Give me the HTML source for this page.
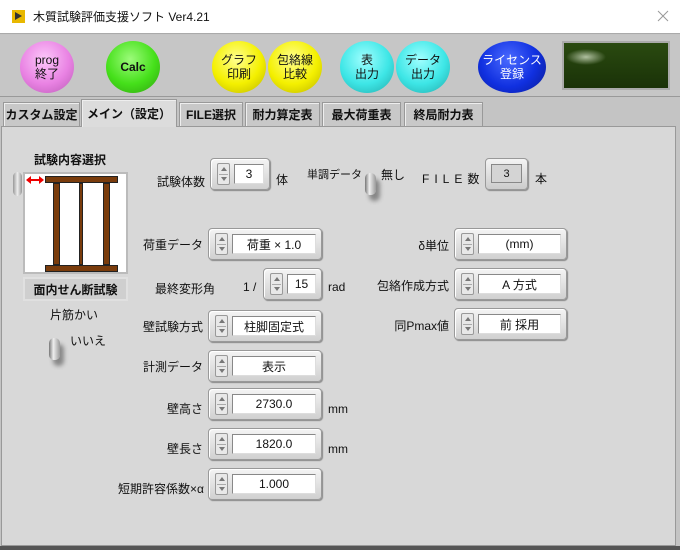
<!DOCTYPE html>
<html><head><meta charset="utf-8"><style>
*{box-sizing:border-box;margin:0;padding:0}
body{width:680px;height:550px;overflow:hidden;background:#c4c4c4;font-family:"Liberation Sans","Noto Sans CJK JP",sans-serif;font-size:12px;color:#111;position:relative}
.a{position:absolute}
.t{position:absolute;white-space:nowrap;line-height:14px}
.btn{position:absolute;border-radius:50%;display:flex;align-items:center;justify-content:center;text-align:center;font-size:12px;line-height:14px}
.tab{position:absolute;top:102px;height:24px;background:#c8c8c8;border:1px solid #999;border-bottom:none;font-weight:bold;font-size:12px;display:flex;align-items:center;justify-content:center;box-shadow:inset 1px 1px 0 #eee;white-space:nowrap}
.ctl{position:absolute;border:1px solid #999;border-radius:4px;background:linear-gradient(#f4f4f4,#d0d0d0);box-shadow:1px 1px 1px #888, inset 1px 1px 0 #fff}
.sp{position:absolute;left:6px;top:4px;width:13px;height:22px;border:1px solid #999;border-radius:2px;background:#e8e8e8}
.sp:before{content:"";position:absolute;left:3px;top:3px;border-left:3px solid transparent;border-right:3px solid transparent;border-bottom:4px solid #777}
.sp:after{content:"";position:absolute;left:3px;bottom:3px;border-left:3px solid transparent;border-right:3px solid transparent;border-top:4px solid #777}
.sp i{position:absolute;left:1px;right:1px;top:10px;border-top:1px solid #aaa}
.fld{position:absolute;left:23px;top:5px;bottom:5px;right:5px;background:#fff;border:1px solid #888;border-right-color:#ddd;border-bottom-color:#ddd;display:flex;align-items:center;justify-content:center;font-size:12px}
.lbl{position:absolute;white-space:nowrap;text-align:right;font-size:12px}
.tog{position:absolute;width:11px;height:22px;border-radius:5px;background:linear-gradient(90deg,#777,#eee 40%,#999);box-shadow:4px 6px 4px #888}
</style></head><body>
<!-- title bar -->
<div class="a" style="left:0;top:0;width:680px;height:34px;background:#fff;border-bottom:1px solid #aaa"></div>
<div class="a" style="left:12px;top:10px;width:13px;height:13px;background:#e8b800"></div>
<div class="a" style="left:15px;top:12px;border-top:4px solid transparent;border-bottom:4px solid transparent;border-left:7px solid #333"></div>
<div class="t" style="left:33px;top:10px;font-size:12px">木質試験評価支援ソフト Ver4.21</div>
<svg class="a" style="left:657px;top:10px" width="12" height="12"><path d="M1 1L11 11M11 1L1 11" stroke="#999" stroke-width="1"/></svg>
<!-- toolbar -->
<div class="a" style="left:0;top:35px;width:680px;height:62px;background:#c6c6c6;border-bottom:1px solid #999"></div>
<div class="btn" style="left:20px;top:41px;width:54px;height:52px;background:radial-gradient(circle at 45% 35%,#fcc8fa,#e982e3 55%,#b85ab4)">prog<br>終了</div>
<div class="btn" style="left:106px;top:41px;width:54px;height:52px;background:radial-gradient(circle at 45% 35%,#9cfb7a,#45e01a 55%,#2fa010);font-weight:bold">Calc</div>
<div class="btn" style="left:212px;top:41px;width:54px;height:52px;background:radial-gradient(circle at 45% 35%,#ffff90,#f4f000 55%,#b9b200)">グラフ<br>印刷</div>
<div class="btn" style="left:268px;top:41px;width:54px;height:52px;background:radial-gradient(circle at 45% 35%,#ffff90,#f4f000 55%,#b9b200)">包絡線<br>比較</div>
<div class="btn" style="left:340px;top:41px;width:54px;height:52px;background:radial-gradient(circle at 45% 35%,#a0ffff,#3de6e6 55%,#22a8a8)">表<br>出力</div>
<div class="btn" style="left:396px;top:41px;width:54px;height:52px;background:radial-gradient(circle at 45% 35%,#a0ffff,#3de6e6 55%,#22a8a8)">データ<br>出力</div>
<div class="btn" style="left:478px;top:41px;width:68px;height:52px;background:radial-gradient(circle at 45% 35%,#4a6aff,#1030e0 55%,#0a1a90);color:#fff">ライセンス<br>登録</div>
<div class="a" style="left:562px;top:41px;width:108px;height:49px;border:2px solid #aaa;background:radial-gradient(ellipse 20px 8px at 22px 14px,#b0c0a0,transparent),linear-gradient(#2a4a10,#1a3208)"></div>
<!-- tabs -->
<div class="tab" style="left:3px;width:77px">カスタム設定</div>
<div class="tab" style="left:81px;width:96px;top:99px;height:28px;background:#dcdcdc;z-index:2;align-items:flex-start;padding-top:5px">メイン（設定）</div>
<div class="tab" style="left:179px;width:64px">FILE選択</div>
<div class="tab" style="left:245px;width:75px">耐力算定表</div>
<div class="tab" style="left:322px;width:79px">最大荷重表</div>
<div class="tab" style="left:404px;width:79px">終局耐力表</div>
<!-- panel -->
<div class="a" style="left:1px;top:126px;width:675px;height:420px;background:#d8d8d8;border:1px solid #999"></div>
<div class="a" style="left:0;top:546px;width:680px;height:4px;background:#555"></div>
<!-- left picture -->
<div class="t" style="left:34px;top:153px;font-weight:bold">試験内容選択</div>
<div class="a" style="left:13px;top:172px;width:9px;height:24px;border-radius:5px;background:linear-gradient(90deg,#999,#eee,#999)"></div>
<div class="a" style="left:23px;top:172px;width:105px;height:102px;background:#fff;border:2px solid #bbb"></div>
<div class="a" style="left:45px;top:176px;width:73px;height:7px;background:#7a3c0c;border:1px solid #222"></div>
<div class="a" style="left:53px;top:183px;width:7px;height:82px;background:#7a3c0c;border:1px solid #222"></div>
<div class="a" style="left:79px;top:183px;width:4px;height:82px;background:#7a3c0c;border:1px solid #222"></div>
<div class="a" style="left:103px;top:183px;width:7px;height:82px;background:#7a3c0c;border:1px solid #222"></div>
<div class="a" style="left:45px;top:265px;width:73px;height:7px;background:#7a3c0c;border:1px solid #222"></div>
<svg class="a" style="left:26px;top:176px" width="18" height="8"><path d="M3 4H15" stroke="#e00" stroke-width="2"/><path d="M0 4L5 0V8Z M18 4L13 0V8Z" fill="#e00"/></svg>
<div class="a" style="left:23px;top:277px;width:105px;height:24px;background:#cfcfcf;border:2px solid #e0e0e0;font-weight:bold;display:flex;align-items:center;justify-content:center">面内せん断試験</div>
<div class="t" style="left:50px;top:308px">片筋かい</div>
<div class="tog" style="left:49px;top:338px"></div>
<div class="t" style="left:70px;top:334px">いいえ</div>
<!-- 試験体数 -->
<div class="lbl" style="right:475px;top:173px">試験体数</div>
<div class="ctl" style="left:210px;top:158px;width:60px;height:32px"><div class="sp"><i></i></div><div class="fld">3</div></div>
<div class="t" style="left:276px;top:173px">体</div>
<div class="t" style="left:307px;top:168px;font-size:11px">単調データ</div>
<div class="tog" style="left:365px;top:173px"></div>
<div class="t" style="left:381px;top:168px">無し</div>
<div class="t" style="left:422px;top:172px;letter-spacing:5px">FILE数</div>
<div class="a" style="left:485px;top:158px;width:43px;height:32px;border:1px solid #999;border-radius:4px;background:linear-gradient(#f4f4f4,#ccc);box-shadow:1px 1px 1px #888"><div class="a" style="left:5px;top:5px;right:5px;bottom:6px;background:#d4d4d4;border:1px solid #888;display:flex;align-items:center;justify-content:center;font-size:11px">3</div></div>
<div class="t" style="left:535px;top:172px">本</div>
<!-- left column controls -->
<div class="lbl" style="right:477px;top:236px">荷重データ</div>
<div class="ctl" style="left:208px;top:228px;width:114px;height:32px"><div class="sp"><i></i></div><div class="fld">荷重 × 1.0</div></div>
<div class="lbl" style="right:465px;top:280px">最終変形角</div>
<div class="t" style="left:243px;top:280px">1 /</div>
<div class="ctl" style="left:263px;top:268px;width:59px;height:32px"><div class="sp"><i></i></div><div class="fld">15</div></div>
<div class="t" style="left:328px;top:280px">rad</div>
<div class="lbl" style="right:477px;top:318px">壁試験方式</div>
<div class="ctl" style="left:208px;top:310px;width:114px;height:32px"><div class="sp"><i></i></div><div class="fld">柱脚固定式</div></div>
<div class="lbl" style="right:477px;top:358px">計測データ</div>
<div class="ctl" style="left:208px;top:350px;width:114px;height:32px"><div class="sp"><i></i></div><div class="fld">表示</div></div>
<div class="lbl" style="right:477px;top:400px">壁高さ</div>
<div class="ctl" style="left:208px;top:388px;width:114px;height:32px"><div class="sp"><i></i></div><div class="fld">2730.0</div></div>
<div class="t" style="left:328px;top:402px">mm</div>
<div class="lbl" style="right:477px;top:440px">壁長さ</div>
<div class="ctl" style="left:208px;top:428px;width:114px;height:32px"><div class="sp"><i></i></div><div class="fld">1820.0</div></div>
<div class="t" style="left:328px;top:442px">mm</div>
<div class="lbl" style="right:476px;top:480px">短期許容係数×α</div>
<div class="ctl" style="left:208px;top:468px;width:114px;height:32px"><div class="sp"><i></i></div><div class="fld">1.000</div></div>
<!-- right column -->
<div class="lbl" style="right:231px;top:237px">δ単位</div>
<div class="ctl" style="left:454px;top:228px;width:113px;height:32px"><div class="sp"><i></i></div><div class="fld">(mm)</div></div>
<div class="lbl" style="right:231px;top:277px">包絡作成方式</div>
<div class="ctl" style="left:454px;top:268px;width:113px;height:32px"><div class="sp"><i></i></div><div class="fld">A 方式</div></div>
<div class="lbl" style="right:231px;top:317px">同Pmax値</div>
<div class="ctl" style="left:454px;top:308px;width:113px;height:32px"><div class="sp"><i></i></div><div class="fld">前 採用</div></div>
</body></html>
